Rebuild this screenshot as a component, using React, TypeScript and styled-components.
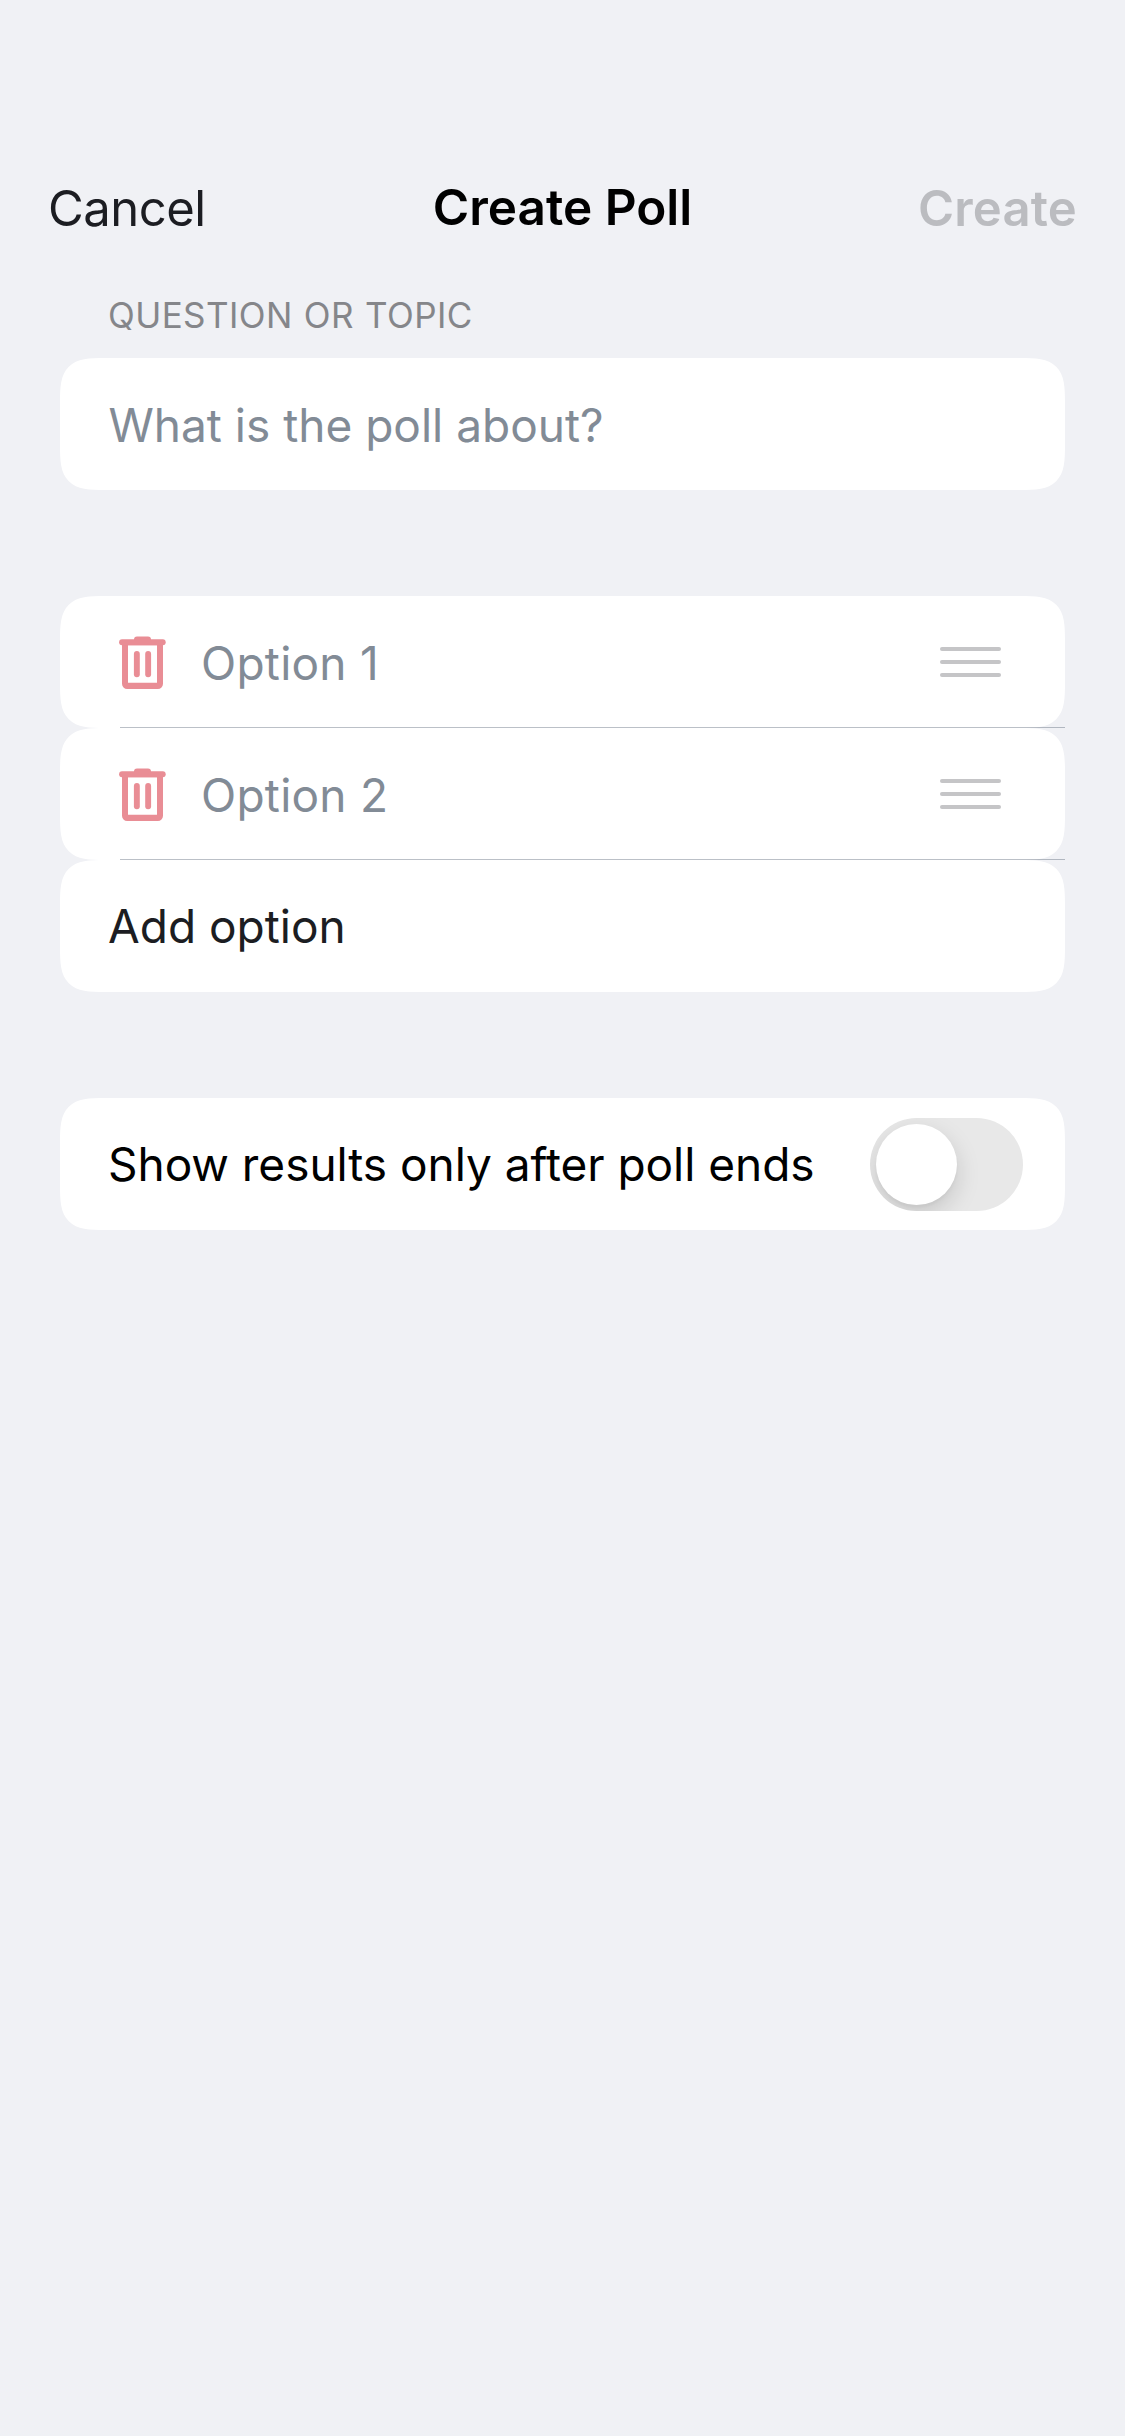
import React, { useState } from 'react';
import styled, { createGlobalStyle } from 'styled-components';

const GlobalStyle = createGlobalStyle`
  *, *::before, *::after { box-sizing: border-box; }
  body {
    margin: 0;
    background: #f0f1f5;
    font-family: Inter, "Liberation Sans", sans-serif;
    -webkit-font-smoothing: antialiased;
  }
  button, input { font: inherit; color: inherit; letter-spacing: inherit; }
`;

const Screen = styled.div`
  width: 1125px;
  min-height: 2436px;
  background: #f0f1f5;
  display: flex;
  flex-direction: column;
`;

const NavBar = styled.header`
  display: grid;
  grid-template-columns: 1fr auto 1fr;
  align-items: start;
  height: 294px;
  padding: 177px 48px 0;
`;

const NavTitle = styled.h1`
  margin: 0;
  font-size: 49.5px;
  line-height: 60px;
  font-weight: 600;
  color: #000;
  white-space: nowrap;
`;

const NavButton = styled.button<{ $primary?: boolean }>`
  border: 0;
  background: none;
  margin: 0;
  padding: 2px 0 0;
  font-size: 49px;
  line-height: 59px;
  justify-self: ${(p) => (p.$primary ? 'end' : 'start')};
  font-weight: ${(p) => (p.$primary ? 600 : 400)};
  letter-spacing: ${(p) => (p.$primary ? '0.2px' : '-0.5px')};
  color: ${(p) => (p.$primary ? '#bbbcc0' : '#1c1d22')};
`;

const Form = styled.main`
  display: flex;
  flex-direction: column;
  padding: 0 60px;
`;

const SectionLabel = styled.div`
  height: 64px;
  padding-left: 48px;
  font-size: 35px;
  line-height: 42px;
  letter-spacing: 0.42px;
  word-spacing: 0.8px;
  text-transform: uppercase;
  color: #85868a;
`;

const Section = styled.section`
  display: flex;
  flex-direction: column;
  margin-bottom: 106px;
`;

const Row = styled.div<{ $divided?: boolean }>`
  position: relative;
  display: flex;
  align-items: center;
  height: 132px;
  padding: 0 42px 0 48px;
  border-radius: 31px;
  background: #fff;

  @supports (corner-shape: superellipse(1.67)) {
    border-radius: 45px;
    corner-shape: superellipse(1.67);
  }

  &::after {
    content: '';
    display: ${(p) => (p.$divided ? 'block' : 'none')};
    position: absolute;
    left: 60px;
    right: 0;
    bottom: 0;
    height: 1px;
    background: rgba(60, 75, 95, 0.35);
  }
`;

const Field = styled.input<{ $option?: boolean }>`
  flex: 1;
  min-width: 0;
  height: 132px;
  border: 0;
  outline: 0;
  background: none;
  padding: 2px 0 0;
  margin-left: ${(p) => (p.$option ? '35px' : '0.5px')};
  font-size: 46px;
  letter-spacing: ${(p) => (p.$option ? '0.25px' : '0')};
  color: #1c1d22;

  &::placeholder {
    color: #828b96;
    opacity: 1;
  }
`;

const AddButton = styled.button`
  flex: 1;
  height: 132px;
  border: 0;
  padding: 0;
  background: none;
  text-align: left;
  font-size: 46px;
  color: #1c1d22;
`;

const RowText = styled.span`
  flex: 1;
  font-size: 46px;
  line-height: 56px;
  letter-spacing: -0.04px;
  color: #000;
  white-space: nowrap;
`;

const IconButton = styled.button`
  display: flex;
  border: 0;
  padding: 0;
  margin-left: 11px;
  background: none;
`;

const Handle = styled.div`
  display: flex;
  flex-direction: column;
  gap: 9.2px;
  width: 61px;
  margin-right: 22px;
`;

const HandleBar = styled.span`
  height: 4.2px;
  border-radius: 2px;
  background: #c5c5c7;
`;

const Switch = styled.button`
  display: flex;
  align-items: center;
  width: 153px;
  height: 93px;
  padding: 6px;
  margin-top: 1px;
  border: 0;
  border-radius: 46.5px;
  background: #e8e8e8;
  overflow: hidden;
`;

const Knob = styled.span<{ $on: boolean }>`
  width: 81px;
  height: 81px;
  margin-left: ${(p) => (p.$on ? '60px' : '0')};
  border-radius: 50%;
  background: #fff;
  box-shadow: 0 9px 24px rgba(0, 0, 0, 0.15), 0 3px 3px rgba(0, 0, 0, 0.03);
`;

const TrashIcon = () => (
  <svg width="47" height="53" viewBox="0 0 47 53" fill="#e98d95" aria-hidden="true">
    <path
      fillRule="evenodd"
      d="M3 6.2H44V47.7A5.2 5.2 0 0 1 38.8 52.9H8.2A5.2 5.2 0 0 1 3 47.7ZM9 9.2V46.7H38V9.2Z"
    />
    <rect x="0.1" y="3.3" width="46.6" height="5.9" rx="2.95" />
    <path d="M15 4V3.4A3 3 0 0 1 18 0.4H29A3 3 0 0 1 32 3.4V4Z" />
    <rect x="14.9" y="15" width="5.9" height="26.2" rx="2.95" />
    <rect x="26.2" y="15" width="5.9" height="26.2" rx="2.95" />
  </svg>
);

const options = ['Option 1', 'Option 2'];

export default function App() {
  const [hidden, setHidden] = useState(false);
  return (
    <>
      <GlobalStyle />
      <Screen>
        <NavBar>
          <NavButton>Cancel</NavButton>
          <NavTitle>Create Poll</NavTitle>
          <NavButton $primary>Create</NavButton>
        </NavBar>
        <Form>
          <SectionLabel>Question or topic</SectionLabel>
          <Section>
            <Row>
              <Field placeholder="What is the poll about?" />
            </Row>
          </Section>
          <Section>
            {options.map((name) => (
              <Row key={name} $divided>
                <IconButton aria-label="Delete">
                  <TrashIcon />
                </IconButton>
                <Field $option placeholder={name} />
                <Handle>
                  <HandleBar />
                  <HandleBar />
                  <HandleBar />
                </Handle>
              </Row>
            ))}
            <Row>
              <AddButton>Add option</AddButton>
            </Row>
          </Section>
          <Section>
            <Row>
              <RowText>Show results only after poll ends</RowText>
              <Switch role="switch" aria-checked={hidden} onClick={() => setHidden(!hidden)}>
                <Knob $on={hidden} />
              </Switch>
            </Row>
          </Section>
        </Form>
      </Screen>
    </>
  );
}
